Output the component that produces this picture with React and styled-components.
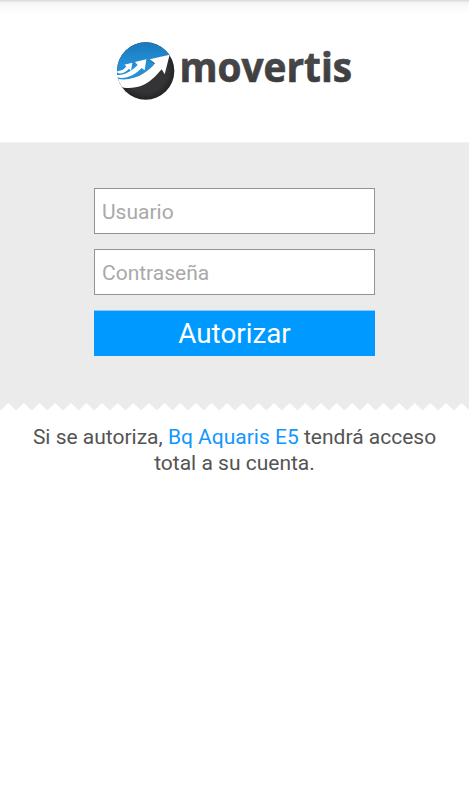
import { useState } from 'react';
import styled, { createGlobalStyle } from 'styled-components';

const DEVICE = 'Bq Aquaris E5';

const Logo = () => (
  <StyledLogo viewBox='0 0 244 70' role='img' aria-label='movertis'>
    <defs>
      <linearGradient id='sky' x1='0' y1='0' x2='0' y2='1'>
        <stop offset='0' stopColor='#1673b5' />
        <stop offset='0.6' stopColor='#2590d8' />
      </linearGradient>
      <radialGradient id='ground' cx='0.5' cy='0.5' r='0.5'>
        <stop offset='0.75' stopColor='#343436' />
        <stop offset='1' stopColor='#232325' />
      </radialGradient>
      <linearGradient id='word' x1='0' y1='0' x2='0' y2='1'>
        <stop offset='0.3' stopColor='#4a4a4c' />
        <stop offset='1' stopColor='#353537' />
      </linearGradient>
      <clipPath id='globe'>
        <circle cx='107' cy='105' r='86' />
      </clipPath>
    </defs>
    <g transform='scale(0.33333)'>
      <circle cx='107' cy='105' r='86' fill='url(#ground)' />
      <g clipPath='url(#globe)'>
        <path d='M0 0H210V54L178 57L120 72L135 84Q100 122 20 147H0Z' fill='url(#sky)' />
        <path
          d='M20 127C40 134 75 130 101 112C120 99 129 91 135 82L119 70L179 56L164 115L155 100C137 121 119 140 98 148C75 157 47 159 31 152Q23 142 20 127Z'
          fill='#fff'
        />
      </g>
      <path
        d='M19 116C38 120 61 109 83 87L75 78L109 70L104 103L95 96C75 117 47 131 21 124Z'
        fill='#fff'
      />
      <path d='M22 105C34 106 43 100 49 91L43 86L67 80L63 105L57 98C46 110 34 115 22 111Z' fill='#fff' />
    </g>
    <text x='69.5' y='46.2' textLength='172.5' lengthAdjust='spacingAndGlyphs'>
      movertis
    </text>
  </StyledLogo>
);

const App = () => {
  const [user, setUser] = useState('');
  const [password, setPassword] = useState('');

  return (
    <StyledPage>
      <GlobalStyle />
      <StyledHeader>
        <Logo />
      </StyledHeader>
      <StyledForm onSubmit={(e) => e.preventDefault()}>
        <StyledInput placeholder='Usuario' value={user} onChange={(e) => setUser(e.target.value)} />
        <StyledInput
          type='password'
          placeholder='Contraseña'
          value={password}
          onChange={(e) => setPassword(e.target.value)}
        />
        <StyledButton type='submit'>Autorizar</StyledButton>
      </StyledForm>
      <StyledZigzag viewBox='0 0 469 8' aria-hidden='true'>
        <defs>
          <pattern id='teeth' x='0.5' width='15.633' height='8' patternUnits='userSpaceOnUse'>
            <path d='M0 0H15.633V7.6L7.816 0L0 7.6Z' fill='#ebebeb' />
          </pattern>
        </defs>
        <rect width='469' height='8' fill='url(#teeth)' />
      </StyledZigzag>
      <StyledNotice>
        Si se autoriza, <StyledDevice>{DEVICE}</StyledDevice> tendrá acceso
        <br />
        total a su cuenta.
      </StyledNotice>
    </StyledPage>
  );
};

const GlobalStyle = createGlobalStyle`
  body {
    margin: 0;
    background: #fff;
  }

  * {
    box-sizing: border-box;
  }
`;

const StyledPage = styled.main`
  display: flex;
  flex-direction: column;
  min-height: 100vh;
  font-family: Roboto, sans-serif;
`;

const StyledHeader = styled.header`
  height: 142px;
  padding: 36px 0 0 110px;
  background: linear-gradient(#dadada 0, #dedede 1px, #f3f3f3 2px, #fafafa 7px, #fff 14px);
`;

const StyledLogo = styled.svg`
  display: block;
  width: 244px;
  height: 70px;
  overflow: visible;

  text {
    font: bold 40.5px 'Open Sans', sans-serif;
    fill: url(#word);
    stroke: #434345;
    stroke-width: 0.7px;
  }
`;

const StyledForm = styled.form`
  display: flex;
  flex-direction: column;
  align-items: center;
  gap: 15px;
  height: 261px;
  padding-top: 45px;
  border-top: 1px solid #f2f2f2;
  background: #ebebeb;
`;

const StyledInput = styled.input`
  width: 281px;
  height: 46px;
  padding: 1px 7px 0;
  border: 1px solid #929292;
  border-radius: 0;
  outline: none;
  background: #fff;
  color: #444;
  font: 21px Roboto, sans-serif;

  &::placeholder {
    color: #a9a9a9;
  }
`;

const StyledButton = styled.button`
  width: 281px;
  height: 46px;
  padding: 0;
  border: 0;
  border-top: 1px solid #8cc6f6;
  background: #09f;
  color: #fff;
  font: 27.8px/44px Roboto, sans-serif;
`;

const StyledZigzag = styled.svg`
  display: block;
  width: 100%;
  height: 8px;
`;

const StyledNotice = styled.p`
  margin: 13px 0 0;
  color: #545454;
  font-size: 21px;
  line-height: 26px;
  text-align: center;
`;

const StyledDevice = styled.span`
  color: #1296ff;
`;

export default App;
